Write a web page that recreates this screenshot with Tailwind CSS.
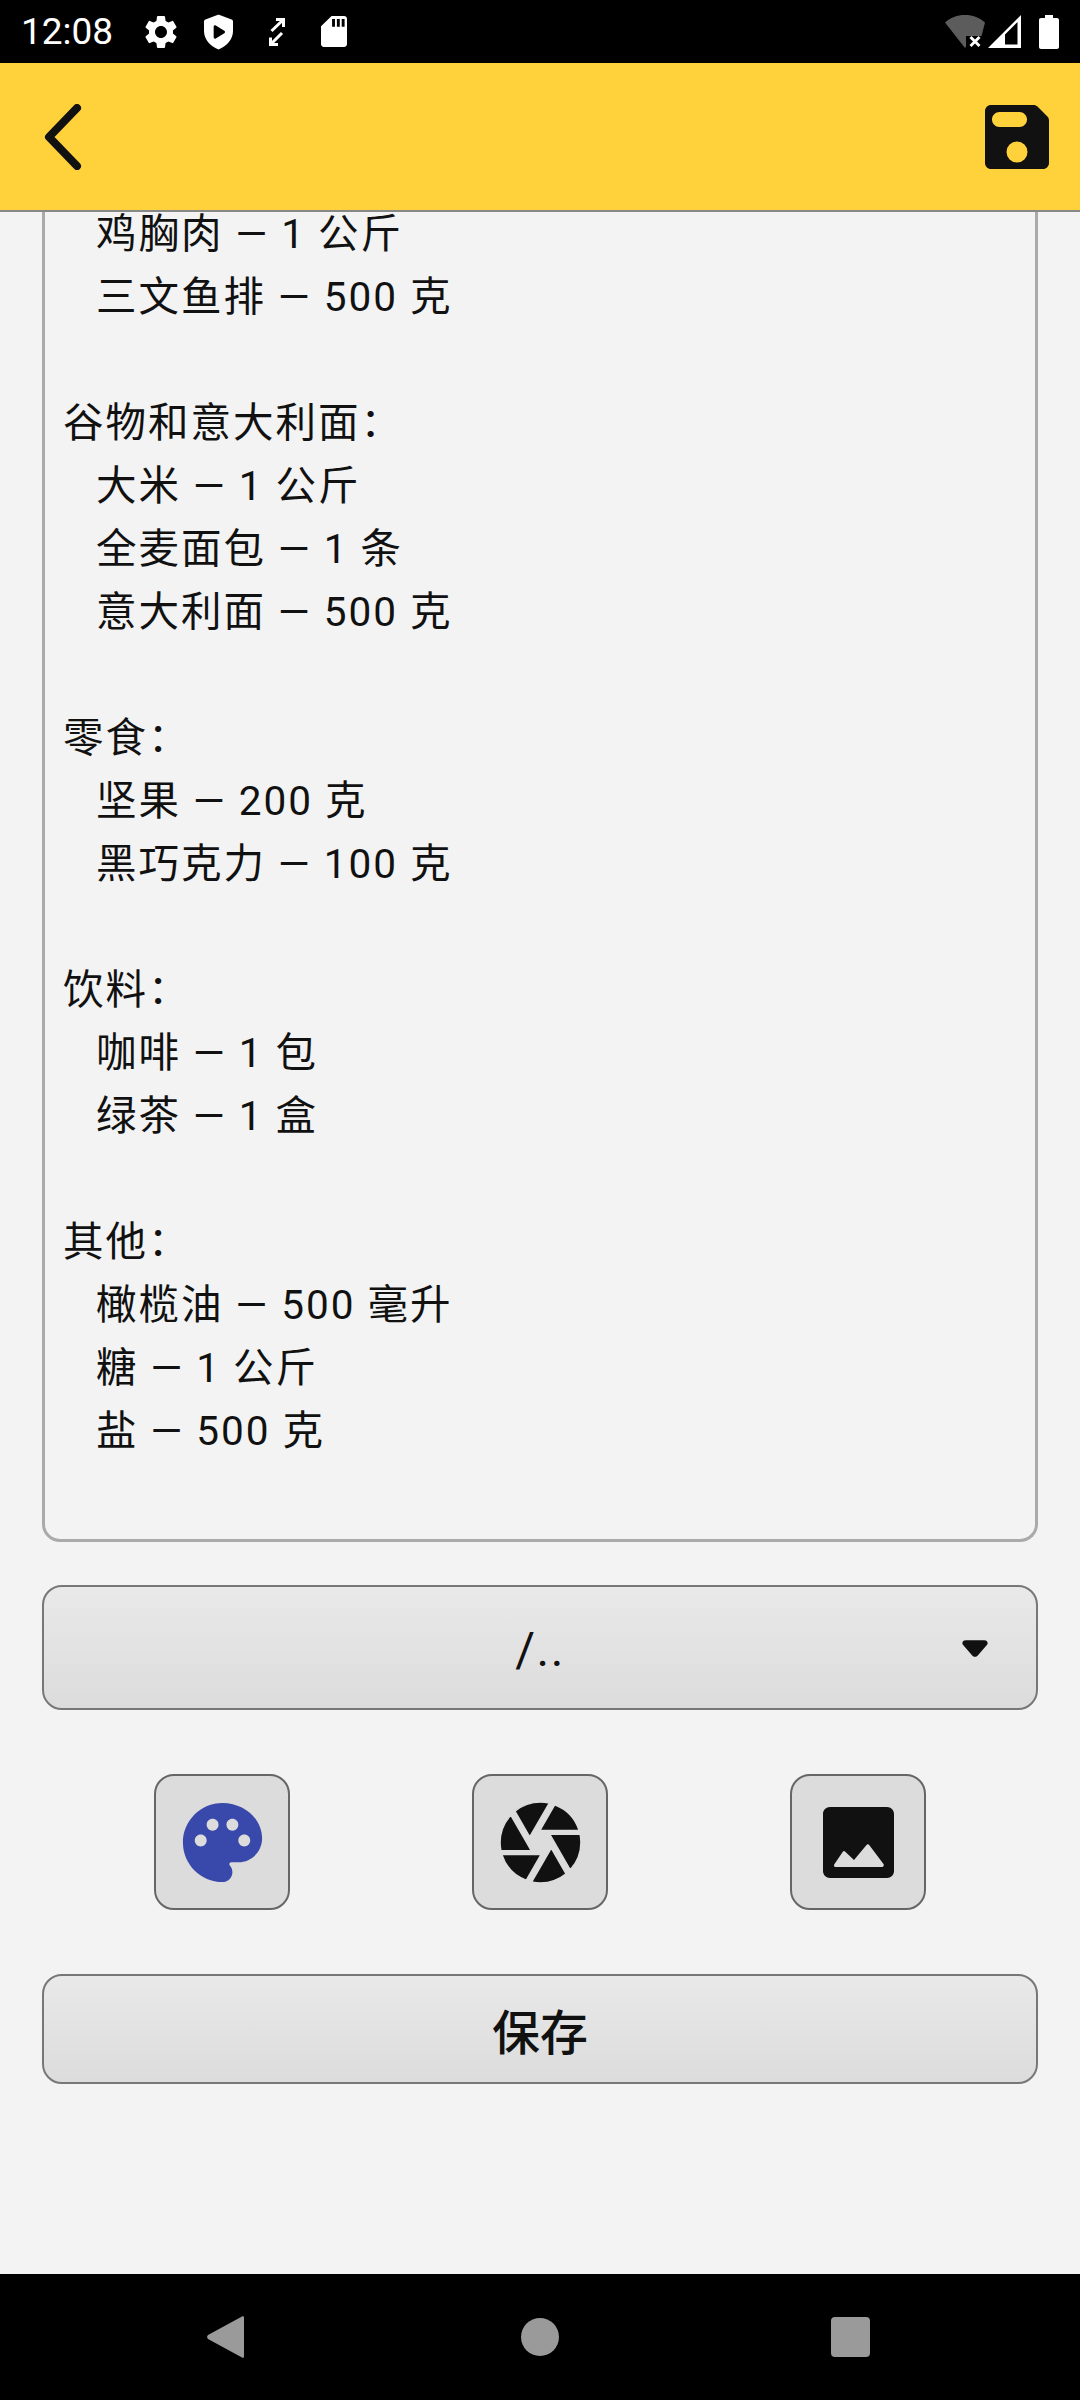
<!DOCTYPE html>
<html lang="zh">
<head>
<meta charset="utf-8">
<script src="https://cdn.jsdelivr.net/npm/@tailwindcss/browser@4"></script>
</head>
<body class="w-[1080px] h-[2400px] overflow-hidden bg-[#f3f3f3] font-['Roboto','Noto_Sans_CJK_SC',sans-serif] text-[#111]">
<div class="flex flex-col h-[2400px]">
  <!-- status bar -->
  <div class="relative z-20 h-[63px] bg-black flex items-center text-white shrink-0">
    <span class="ml-[21px] text-[37px] leading-[63px] w-[124px]">12:08</span>
    <svg class="w-[40px] h-[40px] -ml-[4px]" viewBox="0 0 24 24" fill="#fff"><path d="M19.14 12.94c.04-.3.06-.61.06-.94 0-.32-.02-.64-.07-.94l2.03-1.58c.18-.14.23-.41.12-.61l-1.92-3.32c-.12-.22-.37-.29-.59-.22l-2.39.96c-.5-.38-1.03-.7-1.62-.94l-.36-2.54c-.04-.24-.24-.41-.48-.41h-3.84c-.24 0-.43.17-.47.41l-.36 2.54c-.59.24-1.13.57-1.62.94l-2.39-.96c-.22-.08-.47 0-.59.22L2.74 8.87c-.12.21-.08.47.12.61l2.03 1.58c-.05.3-.09.63-.09.94s.02.64.07.94l-2.03 1.58c-.18.14-.23.41-.12.61l1.92 3.32c.12.22.37.29.59.22l2.39-.96c.5.38 1.03.7 1.62.94l.36 2.54c.05.24.24.41.48.41h3.84c.24 0 .44-.17.47-.41l.36-2.54c.59-.24 1.13-.56 1.62-.94l2.39.96c.22.08.47 0 .59-.22l1.92-3.32c.12-.22.07-.47-.12-.61l-2.01-1.58zM12 15.6c-1.98 0-3.6-1.62-3.6-3.6s1.62-3.6 3.6-3.6 3.6 1.62 3.6 3.6-1.62 3.6-3.6 3.6z"/></svg>
    <svg class="w-[29px] h-[36px] ml-[23px]" viewBox="0 0 30 36" fill="#fff"><path fill-rule="evenodd" d="M13.800.5L1.500 5C.6 5.300 0 6.200 0 7.200V17c0 8.500 6 15.500 15 19 9-3.500 15-10.500 15-19V7.200c0-1-.6-1.900-1.500-2.200L16.200.5c-.8-.3-1.600-.3-2.400 0zM10 12.500c0-1.200 1.200-1.900 2.200-1.300l8.800 5.500c1 .6 1 2 0 2.600l-8.800 5.500c-1 .6-2.200-.1-2.200-1.300V12.500z"/></svg>
    <svg class="w-[16px] h-[28px] ml-[36px]" viewBox="0 0 16 28" fill="none" stroke="#fff" stroke-width="3"><path d="M7 1.500H14.500V9"/><path d="M14 2L2.500 13"/><path d="M1.500 19.500V26.500H9"/><path d="M2 26L13 15"/></svg>
    <svg class="w-[26px] h-[33px] ml-[36px]" viewBox="0 0 27 32" fill="#fff"><path fill-rule="evenodd" d="M11 0h13c1.700 0 3 1.300 3 3v26c0 1.700-1.300 3-3 3H3c-1.700 0-3-1.300-3-3V10.500L11 0zM11.500 3v8h3V3h-3zM16.500 3v8h3V3h-3zM21.500 3v8h3V3h-3z"/></svg>
    <div class="flex-1"></div>
    <svg class="w-[40px] h-[34px]" viewBox="0 0 40 34"><path fill="#5c5c5c" d="M20 0C12 0 5.500 2.500 0 7.500L20 33l1-1.500V21h15.500L40 7.500C34.500 2.500 28 0 20 0z"/><path fill="#fff" d="M24.500 23l2-2 3.500 3.500 3.500-3.500 2 2-3.500 3.500 3.500 3.500-2 2-3.500-3.500-3.500 3.500-2-2 3.500-3.500z"/></svg>
    <svg class="w-[33px] h-[33px] ml-[3px]" viewBox="0 0 33 33" fill="#fff"><path fill-rule="evenodd" d="M33 0v33H0L33 0zM29.500 7L17 19.500V29.500H29.500V7z"/></svg>
    <svg class="w-[20px] h-[34px] ml-[18px] mr-[21px]" viewBox="0 0 20 34" fill="#fff"><path d="M6 0h8v3h4c1.100 0 2 .9 2 2v27c0 1.100-.9 2-2 2H2c-1.100 0-2-.9-2-2V5c0-1.100.9-2 2-2h4V0z"/></svg>
  </div>
  <!-- app bar -->
  <div class="relative z-10 h-[149px] shrink-0 bg-[#ffd13b] border-b-[2px] border-[#888] flex items-center justify-between pl-[44px] pr-[31px]">
    <svg class="w-[38px] h-[66px]" viewBox="0 0 38 66" fill="none" stroke="#111" stroke-width="8" stroke-linecap="round" stroke-linejoin="round"><path d="M33 4L5 33l28 29"/></svg>
    <svg class="w-[64px] h-[64px]" viewBox="0 0 64 64"><path fill="#111" fill-rule="evenodd" d="M6 0h42.500c1.500 0 3 .6 4 1.600L62.400 11.500c1 1 1.600 2.500 1.600 4V58c0 3.300-2.700 6-6 6H6c-3.300 0-6-2.700-6-6V6c0-3.300 2.700-6 6-6zM14.500 7C10.500 7 7 10.300 7 14.500S10.500 22 14.500 22h20c4 0 7.500-3.300 7.500-7.500S38.500 7 34.500 7h-20zM32 36.500a10.500 10.500 0 1 0 0 21 10.500 10.500 0 0 0 0-21z"/></svg>
  </div>
  <!-- content -->
  <main class="flex-1 flex flex-col px-[42px]">
    <div class="-mt-[9px] border-x-[3px] border-b-[3px] border-[#aaa] rounded-b-[18px] pl-[18px] pb-[76px] text-[40.5px] leading-[63px] tracking-[2px]">
      <div class="pl-[33px]">鸡胸肉 — 1 公斤</div>
      <div class="pl-[33px]">三文鱼排 — 500 克</div>
      <div class="h-[63px]"></div>
      <div>谷物和意大利面：</div>
      <div class="pl-[33px]">大米 — 1 公斤</div>
      <div class="pl-[33px]">全麦面包 — 1 条</div>
      <div class="pl-[33px]">意大利面 — 500 克</div>
      <div class="h-[63px]"></div>
      <div>零食：</div>
      <div class="pl-[33px]">坚果 — 200 克</div>
      <div class="pl-[33px]">黑巧克力 — 100 克</div>
      <div class="h-[63px]"></div>
      <div>饮料：</div>
      <div class="pl-[33px]">咖啡 — 1 包</div>
      <div class="pl-[33px]">绿茶 — 1 盒</div>
      <div class="h-[63px]"></div>
      <div>其他：</div>
      <div class="pl-[33px]">橄榄油 — 500 毫升</div>
      <div class="pl-[33px]">糖 — 1 公斤</div>
      <div class="pl-[33px]">盐 — 500 克</div>
    </div>
    <!-- path select -->
    <div class="relative mt-[43px] h-[125px] pt-[4px] border-[2px] border-[#777] rounded-[20px] bg-gradient-to-b from-[#e9e9e9] to-[#dcdcdc] flex items-center justify-center text-[48px] tracking-[1.5px]">
      <span>/..</span>
      <svg class="absolute left-[918px] top-[53px] w-[26px] h-[17px]" viewBox="0 0 28 18" fill="#111"><path d="M4 0h20c3 0 4.500 2.500 3 5L17 16.500c-1.500 2-4.500 2-6 0L1 5C-.5 2.500 1 0 4 0z"/></svg>
    </div>
    <!-- tool buttons -->
    <div class="mt-[64px] flex justify-center gap-[182px]">
      <div class="w-[136px] h-[136px] flex items-center justify-center border-[2px] border-[#666] rounded-[20px] bg-[#dcdcdc]">
        <svg class="w-[95px] h-[95px]" viewBox="0 0 24 24" fill="#3949ab"><path d="M12 2C6.490 2 2 6.490 2 12s4.490 10 10 10c1.380 0 2.500-1.120 2.500-2.500 0-.61-.23-1.200-.64-1.670-.08-.1-.13-.21-.13-.33 0-.28.22-.5.5-.5H16c3.310 0 6-2.690 6-6 0-4.960-4.490-9-10-9zm5.500 11c-.83 0-1.500-.67-1.500-1.500s.67-1.500 1.500-1.500 1.500.67 1.500 1.500-.67 1.500-1.500 1.500zm-3-4c-.83 0-1.500-.67-1.500-1.500S13.670 6 14.500 6s1.500.67 1.500 1.500S15.330 9 14.500 9zM5 11.500c0-.83.67-1.500 1.500-1.500s1.500.67 1.500 1.500S7.330 13 6.500 13 5 12.330 5 11.500zm6-4c0 .83-.67 1.500-1.500 1.500S8 8.330 8 7.500 8.670 6 9.500 6s1.500.67 1.500 1.500z"/></svg>
      </div>
      <div class="w-[136px] h-[136px] flex items-center justify-center border-[2px] border-[#666] rounded-[20px] bg-[#dcdcdc]">
        <svg class="w-[97px] h-[97px]" viewBox="0 0 24 24" fill="#111"><path stroke="#dcdcdc" stroke-width=".35" stroke-linejoin="round" d="M9.400 10.500l4.770-8.260C13.470 2.090 12.750 2 12 2c-2.400 0-4.600.85-6.320 2.250l3.660 6.350.06-.1zM21.540 9c-.92-2.920-3.150-5.260-6-6.340L11.880 9h9.660zm.26 1h-7.490l.29.5 4.760 8.250C21 16.970 22 14.610 22 12c0-.69-.07-1.350-.2-2zM8.540 12l-3.900-6.750C3.010 7.030 2 9.390 2 12c0 .69.07 1.350.2 2h7.490l-1.150-2zm-6.080 3c.92 2.920 3.150 5.260 6 6.340L12.120 15H2.460zm11.270 0l-3.900 6.760c.7.15 1.420.24 2.170.24 2.400 0 4.600-.85 6.320-2.250l-3.660-6.350-.93 1.600z"/></svg>
      </div>
      <div class="w-[136px] h-[136px] flex items-center justify-center border-[2px] border-[#666] rounded-[20px] bg-[#dcdcdc]">
        <svg class="w-[71px] h-[71px]" viewBox="0 0 71 71"><path fill="#111" fill-rule="evenodd" d="M7 0h57c3.900 0 7 3.100 7 7v57c0 3.900-3.100 7-7 7H7c-3.900 0-7-3.100-7-7V7c0-3.900 3.100-7 7-7zM11.500 57L20 44.500c.5-.8 1.500-.8 2 0L31 53 43.500 38c.7-1 2-1 2.700 0L60.500 57c.8 1.200 0 3-1.500 3H12.500c-1.500 0-2-1.800-1-3z"/></svg>
      </div>
    </div>
    <!-- save -->
    <div class="mt-[64px] h-[110px] pt-[10px] border-[2px] border-[#777] rounded-[20px] bg-gradient-to-b from-[#e9e9e9] to-[#dcdcdc] flex items-center justify-center text-[48px] font-medium">保存</div>
  </main>
  <!-- nav bar -->
  <div class="h-[126px] shrink-0 bg-black flex items-center">
    <svg class="ml-[207px] w-[37px] h-[42px]" viewBox="0 0 37 42" fill="#9a9a9a"><path d="M35 .5c1-.8 2-.2 2 1v39c0 1.200-1 1.800-2 1L1 23c-1.200-1-1.200-3 0-4L35 .5z"/></svg>
    <div class="ml-[277px] w-[38px] h-[38px] rounded-full bg-[#9a9a9a]"></div>
    <div class="ml-[272px] w-[39px] h-[40px] rounded-[4px] bg-[#9a9a9a]"></div>
  </div>
</div>
</body>
</html>
